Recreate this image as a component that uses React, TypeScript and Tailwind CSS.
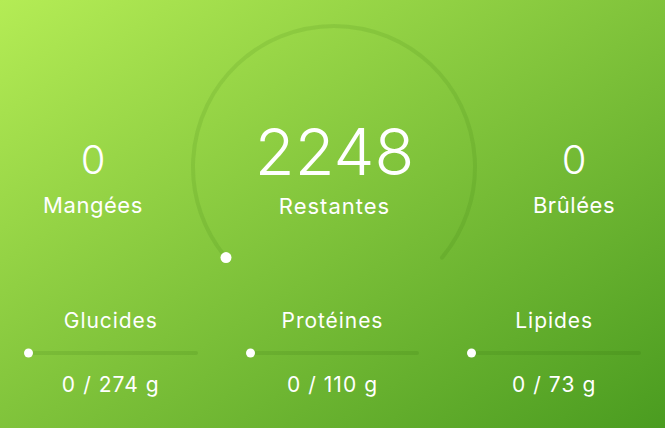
import { Fragment } from 'react';

interface Stat {
  value: number;
  label: string;
}

interface Macro {
  name: string;
  eaten: number;
  goal: number;
}

const macros: Macro[] = [
  { name: 'Glucides', eaten: 0, goal: 274 },
  { name: 'Protéines', eaten: 0, goal: 110 },
  { name: 'Lipides', eaten: 0, goal: 73 },
];

function SideStat({ value, label }: Stat) {
  return (
    <div className="flex flex-col items-center pt-[140px]">
      <span className="text-[40px] leading-none font-light mb-[14px]">{value}</span>
      <span className="text-[22px] leading-none tracking-[0.025em]">{label}</span>
    </div>
  );
}

function MacroBar({ name, eaten, goal }: Macro) {
  const pct = Math.min(100, (eaten / goal) * 100);
  return (
    <div className="flex flex-col items-center px-[24px]">
      <span className="text-[21px] leading-none tracking-[0.045em]">{name}</span>
      <div className="relative w-full h-[4px] mt-[20px] rounded-full bg-[rgba(30,80,0,0.11)]">
        <div className="h-full rounded-full bg-white" style={{ width: `${pct}%` }} />
        <div className="absolute left-0 top-1/2 -translate-y-1/2 w-[9px] h-[9px] rounded-full bg-white" />
      </div>
      <span className="text-[21px] leading-none mt-[19px] tracking-[0.05em]">
        {eaten} / {goal} g
      </span>
    </div>
  );
}

export default function App() {
  return (
    <div
      className="relative w-[665px] h-[428px] overflow-hidden bg-gradient-to-br from-[#b4ec55] to-[#4a9c20] text-white"
      style={{ fontFamily: 'Inter, "Noto Sans", sans-serif' }}
    >
      <svg
        className="absolute left-[184px] top-[17px]"
        width="300"
        height="260"
        viewBox="0 0 300 260"
        fill="none"
      >
        <path
          d="M 42 240.6 A 141 141 0 1 1 258 240.6"
          stroke="rgba(40,100,0,0.11)"
          strokeWidth="4"
          strokeLinecap="round"
        />
        <circle cx="42" cy="240.6" r="5.5" fill="#fff" />
      </svg>

      <div className="relative grid grid-cols-[186px_297px_182px]">
        <SideStat value={0} label="Mangées" />
        <div className="flex flex-col items-center pt-[119px]">
          <span className="text-[65px] leading-none font-light mb-[11px]">2248</span>
          <span className="text-[22px] leading-none tracking-[0.045em]">Restantes</span>
        </div>
        <SideStat value={0} label="Brûlées" />
      </div>

      <div className="relative grid grid-cols-3 mt-[93px]">
        {macros.map((m) => (
          <Fragment key={m.name}>
            <MacroBar {...m} />
          </Fragment>
        ))}
      </div>
    </div>
  );
}
